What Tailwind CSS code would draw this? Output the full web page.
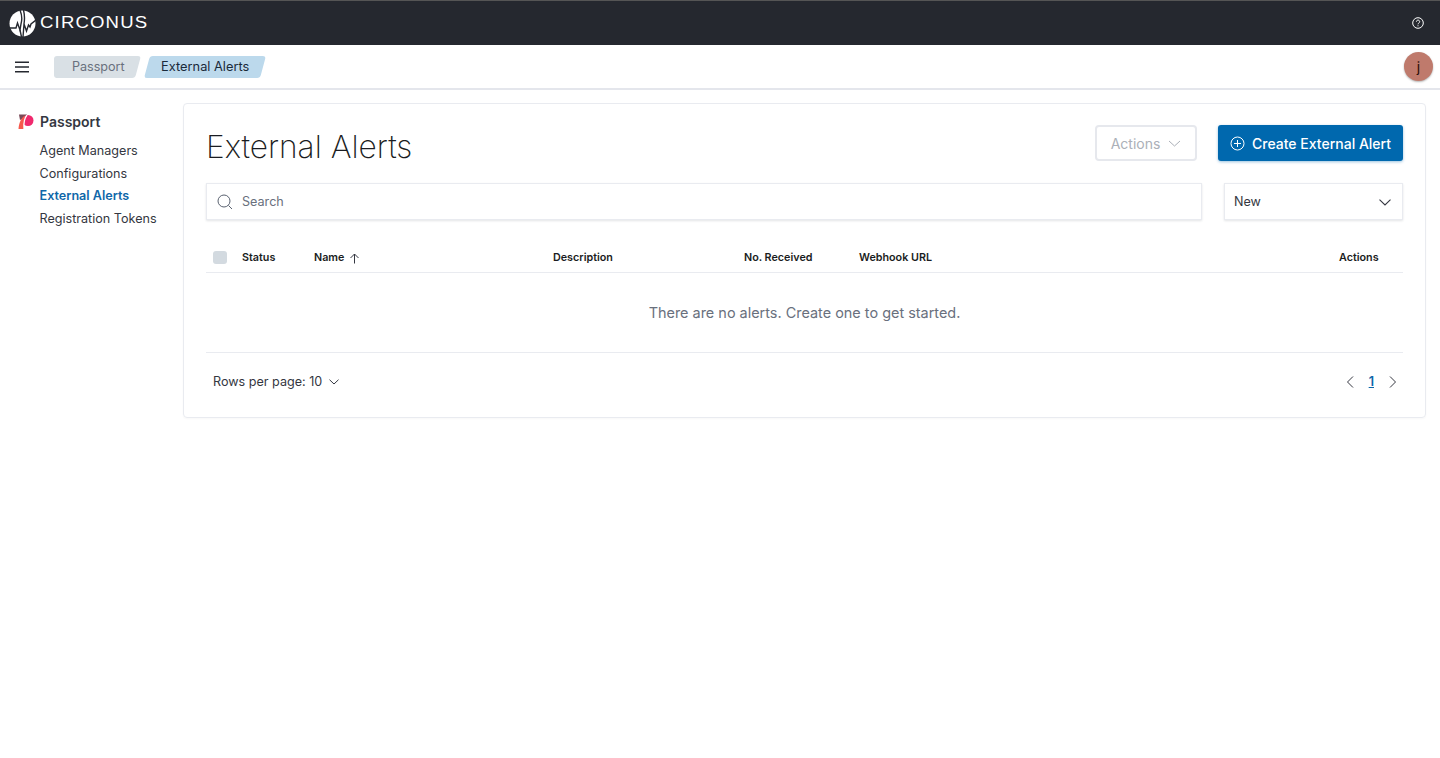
<!doctype html>
<html>

<head>
    <meta charset="UTF-8">
    <title>External Alerts</title>
    <script src="https://cdn.jsdelivr.net/npm/@tailwindcss/browser@4"></script>
</head>

<body class="bg-white font-['Inter',sans-serif] text-[#343741]">
    <div class="h-[758px] w-[1440px] overflow-hidden">
        <!-- top bar -->
        <header class="flex h-[45px] items-center justify-between border-t border-t-[#555] bg-[#25282f] pl-[9px] pr-[16px]">
            <div class="flex items-center gap-[4px]">
                <svg width="27" height="27" viewBox="0 0 27 27">
                    <circle cx="13.5" cy="13.5" r="13" fill="#fff" />
                    <path d="M11 0C13 5 13.5 9 12 14L11 20 8.5 13 7 18H0" fill="none" stroke="#25282f" stroke-width="1.4" />
                    <path d="M11 20L12.5 27M14 27L15 14 17.5 21 19.5 15 21 17 22 14 27 10" fill="none" stroke="#25282f" stroke-width="1.4" />
                    <path d="M15 14C16 8 15.5 4 14.5 0" fill="none" stroke="#25282f" stroke-width="1.4" />
                </svg>
                <span class="origin-left scale-x-[1.16] font-['Liberation_Sans',sans-serif] text-[16px] leading-none tracking-[1px] text-white">CIRCONUS</span>
            </div>
            <svg width="12" height="12" viewBox="0 0 12 12" fill="none" stroke="#fff" stroke-width="1">
                <circle cx="6" cy="6" r="5.3" />
                <path d="M4.4 4.7c0-2.1 3.3-2.1 3.3 0 0 1.3-1.7 1.3-1.7 2.6" />
                <path d="M6 8.3v1" />
            </svg>
        </header>

        <!-- breadcrumb bar -->
        <div class="flex h-[45px] items-center justify-between border-b-2 border-b-[#e4e6ec] pl-[15px] pr-[7px]">
            <div class="flex items-center">
                <svg width="14" height="12" viewBox="0 0 14 12" fill="none" stroke="#25282f" stroke-width="1.6">
                    <path d="M0 1.2h14M0 6h14M0 10.8h14" />
                </svg>
                <div class="ml-[25px] flex h-[22px] items-center">
                    <span class="h-full w-[10px] rounded-l-[3px] bg-[#d9e0e5]"></span>
                    <div class="-ml-[5px] flex h-full w-[79px] -skew-x-[15deg] items-center justify-center rounded-r-[3px] bg-[#d9e0e5]">
                        <span class="skew-x-[15deg] text-[12.6px] text-[#69707d]">Passport</span>
                    </div>
                </div>
                <div class="ml-[9px] flex h-[22px] w-[116px] -skew-x-[15deg] items-center justify-center rounded-[3px] bg-[#bcd9ec]">
                    <span class="skew-x-[15deg] text-[12.8px] text-[#1a2a3a]">External Alerts</span>
                </div>
            </div>
            <div class="flex h-[29px] w-[29px] items-center justify-center rounded-full bg-[#bf7a6c] text-[14px] text-[#2a0d08] shadow-[0_1px_2px_rgba(0,0,0,0.3)]">j</div>
        </div>

        <div class="flex">
            <!-- side nav -->
            <nav class="w-[183px] shrink-0 pl-[18px] pt-[23px]">
                <div class="flex items-center gap-[6px]">
                    <svg width="16" height="16" viewBox="0 0 16 16">
                        <path d="M1 0.5H9V3L2 6Z" fill="#7a4a58" />
                        <circle cx="10" cy="6.5" r="5.5" fill="#f0296d" />
                        <path d="M0.5 15C1 9 3 4 7 1.5 6 6 5.5 10 6 15Z" fill="#f6594c" />
                        <path d="M6 15C5.5 9 6.5 4 9 1" fill="none" stroke="#fff" stroke-width="1.3" />
                    </svg>
                    <span class="text-[14px] font-semibold leading-[18px]">Passport</span>
                </div>
                <ul class="mt-[9px] pl-[21.5px] text-[12.6px] leading-[22.5px]">
                    <li>Agent Managers</li>
                    <li>Configurations</li>
                    <li class="font-semibold text-[#0f67a9]">External Alerts</li>
                    <li>Registration Tokens</li>
                </ul>
            </nav>

            <!-- main panel -->
            <main class="mt-[13px] h-[315px] w-[1243px] rounded-[4px] border border-[#e9ebf0] px-[22px] pt-[21px] shadow-[0_1px_2px_rgba(0,0,0,0.03)]">
                <div class="flex h-[37px] items-start justify-between">
                    <h1 class="text-[31.7px] font-extralight leading-[44px] text-[#1a1c21]">External Alerts</h1>
                    <div class="flex items-center gap-[21px]">
                        <button class="flex h-[36px] w-[102px] items-center justify-center gap-[8px] rounded-[4px] border-2 border-[#e6e8ed] text-[14px] text-[#abb0b8]">
                            Actions
                            <svg width="13" height="7" viewBox="0 0 13 7" fill="none" stroke="#abb0b8">
                                <path d="M1 1l5.5 5L12 1" />
                            </svg>
                        </button>
                        <button class="flex h-[36px] w-[185px] items-center justify-center gap-[7px] rounded-[3px] bg-[#0068ae] text-[14px] font-medium text-white shadow-[0_1px_3px_rgba(0,104,174,0.4)]">
                            <svg width="15" height="15" viewBox="0 0 15 15" fill="none" stroke="#fff">
                                <circle cx="7.5" cy="7.5" r="6.5" />
                                <path d="M7.5 4v7M4 7.5h7" />
                            </svg>
                            Create External Alert
                        </button>
                    </div>
                </div>

                <div class="mt-[21px] flex items-center justify-between">
                    <div class="flex h-[37px] w-[996px] items-center gap-[9px] border border-[#e9ebf0] pl-[10px] pt-[1px] shadow-[0_1px_2px_rgba(30,40,60,0.12)]">
                        <svg width="16" height="16" viewBox="0 0 16 16" fill="none" stroke="#5a6270">
                            <circle cx="7" cy="7" r="6" />
                            <path d="M11.5 11.5l3.5 3.5" />
                        </svg>
                        <span class="text-[12.6px] text-[#69707d]">Search</span>
                    </div>
                    <div class="flex h-[37px] w-[179px] items-center justify-between border border-[#e9ebf0] pl-[9px] pr-[11px] pt-[1px] shadow-[0_1px_2px_rgba(30,40,60,0.12)]">
                        <span class="text-[12.6px]">New</span>
                        <svg width="12" height="7" viewBox="0 0 12 7" fill="none" stroke="#343741" stroke-width="1.1">
                            <path d="M0.5 0.7l5.5 5.3 5.5-5.3" />
                        </svg>
                    </div>
                </div>

                <!-- table -->
                <div class="mt-[20px] flex h-[33px] items-center border-b border-b-[#e9ebf0] pt-[4px] text-[10.75px] font-semibold text-[#1a1c21]">
                    <span class="-mt-[2px] ml-[7px] h-[13px] w-[14px] rounded-[3px] bg-[#d3dae0]"></span>
                    <span class="ml-[15px] w-[72px]">Status</span>
                    <span class="flex w-[239px] items-center gap-[5px]">Name
                        <svg width="11" height="11" viewBox="0 0 11 11" fill="none" stroke="#343741">
                            <path d="M5.5 10.5V1M1.5 5l4-4 4 4" />
                        </svg>
                    </span>
                    <span class="w-[191px]">Description</span>
                    <span class="w-[115px]">No. Received</span>
                    <span class="w-[480px]">Webhook URL</span>
                    <span>Actions</span>
                </div>
                <div class="flex h-[80px] items-center justify-center border-b border-b-[#e9ebf0] text-[14.45px] text-[#69707d]">There are no alerts. Create one to get started.</div>

                <div class="flex h-[58px] items-center justify-between pl-[7px] pr-[6px]">
                    <div class="flex items-center gap-[7px] text-[12.6px]">
                        Rows per page: 10
                        <svg width="10" height="6" viewBox="0 0 10 6" fill="none" stroke="#343741">
                            <path d="M0.5 0.7l4.5 4.3 4.5-4.3" />
                        </svg>
                    </div>
                    <div class="flex items-center gap-[15px]">
                        <svg width="8" height="12" viewBox="0 0 8 12" fill="none" stroke="#343741">
                            <path d="M7 0.5L1.5 6 7 11.5" />
                        </svg>
                        <span class="text-[12.6px] font-semibold text-[#0f67a9] underline">1</span>
                        <svg width="8" height="12" viewBox="0 0 8 12" fill="none" stroke="#343741">
                            <path d="M1 0.5L6.5 6 1 11.5" />
                        </svg>
                    </div>
                </div>
            </main>
        </div>
    </div>
</body>

</html>
